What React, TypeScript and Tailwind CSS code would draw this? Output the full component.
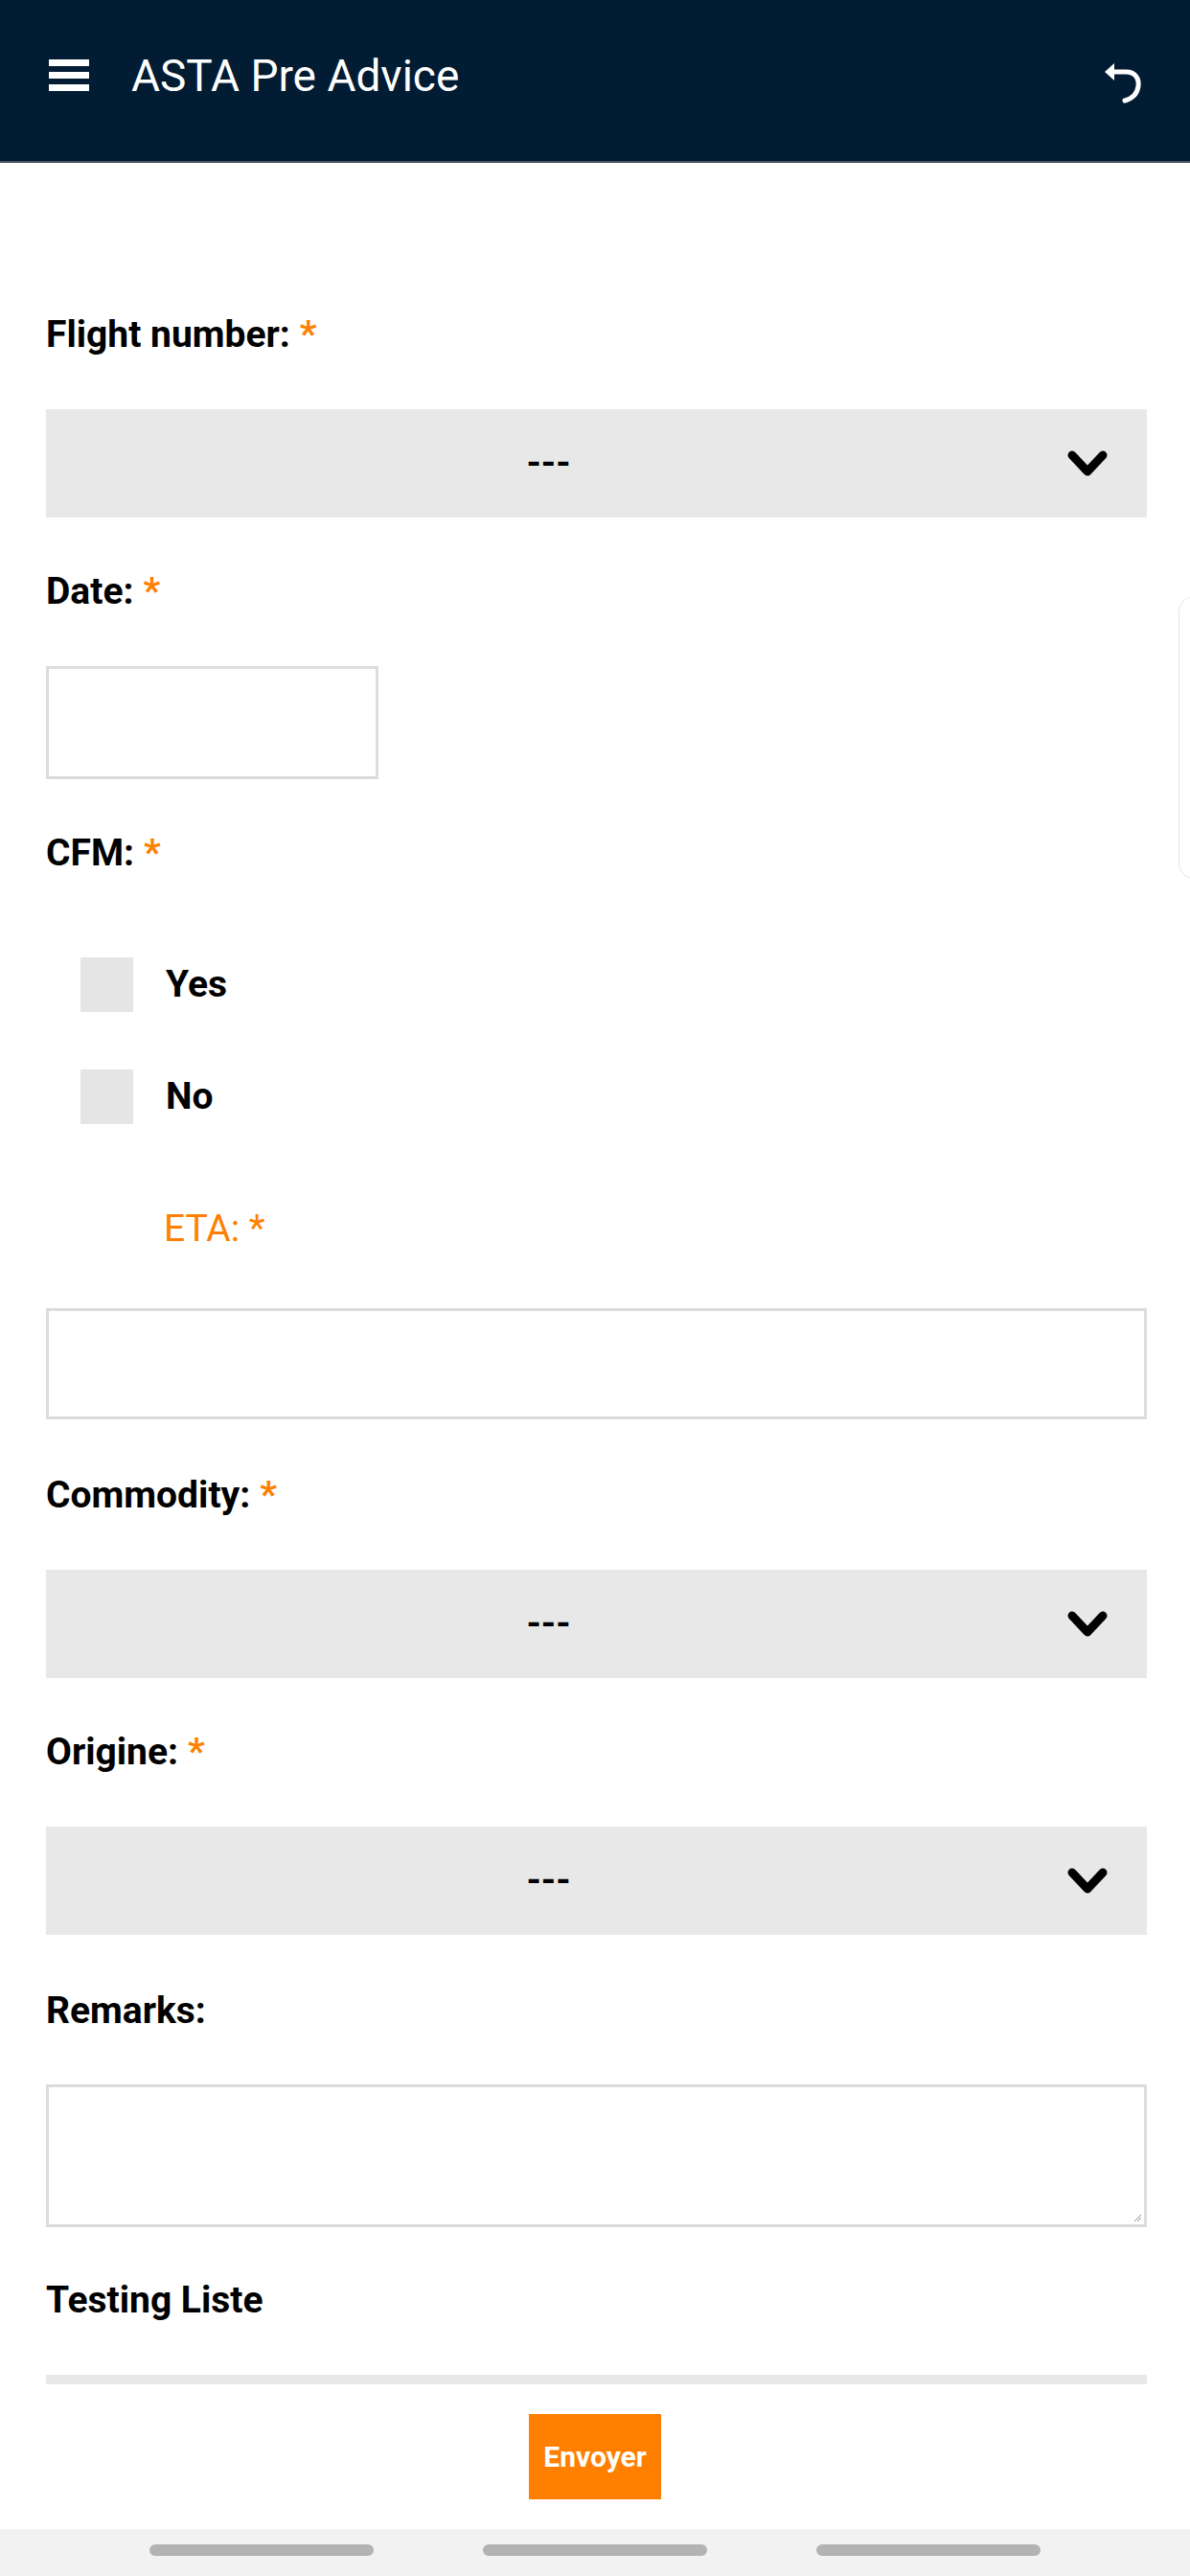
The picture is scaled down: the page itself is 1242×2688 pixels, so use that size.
import React from "react";

const font = { fontFamily: "Roboto, 'Noto Sans', Arial, sans-serif" };

function Label({ text, required }: { text: string; required?: boolean }) {
  return (
    <div className="h-[60px] flex items-center text-[39px] font-bold text-black leading-none">
      <span>{text}</span>
      {required && <span className="ml-[10px] text-[#ff7f00]">*</span>}
    </div>
  );
}

function Chevron() {
  return (
    <svg width="48" height="34" viewBox="0 0 48 34" className="absolute right-[37px] top-1/2 -translate-y-1/2">
      <polyline
        points="7,8 23,25 39,8"
        fill="none"
        stroke="#000"
        strokeWidth="9"
        strokeLinecap="round"
        strokeLinejoin="round"
      />
    </svg>
  );
}

function SelectBox({ className = "" }: { className?: string }) {
  return (
    <div className={`relative h-[113px] bg-[#e8e8e8] flex items-center justify-center pr-[100px] ${className}`}>
      <span className="text-[39px] font-bold text-black leading-none">---</span>
      <Chevron />
    </div>
  );
}

function CheckRow({ text, className = "" }: { text: string; className?: string }) {
  return (
    <div className={`flex items-center pl-[36px] ${className}`}>
      <div className="w-[55px] h-[57px] bg-[#e5e5e5]" />
      <span className="ml-[34px] text-[39px] font-bold text-black leading-none">{text}</span>
    </div>
  );
}

export default function App() {
  return (
    <div className="relative w-[1242px] h-[2688px] bg-white overflow-hidden flex flex-col" style={font}>
      {/* top app bar */}
      <header className="h-[170px] shrink-0 bg-[#011c33] border-b-[2px] border-[#4a5663] flex items-start">
        <div className="h-[157px] w-full flex items-center pl-[51px] pr-[50px]">
          <div className="w-[42px] flex flex-col gap-[6px]">
            <div className="h-[7px] bg-white" />
            <div className="h-[7px] bg-white" />
            <div className="h-[7px] bg-white" />
          </div>
          <h1 className="ml-[44px] text-[46px] text-white font-normal leading-none">ASTA Pre Advice</h1>
          <svg width="44" height="52" viewBox="0 0 44 52" className="ml-auto mt-[12px]">
            <path
              d="M12 16 H27 C37 16 41 23 40 31 C39 39 33 44 26 46"
              fill="none"
              stroke="#fff"
              strokeWidth="5"
              strokeLinecap="round"
            />
            <polygon points="5,16 15,7 15,25" fill="#fff" />
          </svg>
        </div>
      </header>

      {/* form */}
      <main className="flex-1 flex flex-col px-[48px] pt-[149px] pr-[45px]">
        <Label text="Flight number:" required />
        <SelectBox className="mt-[48px]" />

        <div className="mt-[47px]">
          <Label text="Date:" required />
        </div>
        <div className="mt-[48px] w-[347px] h-[118px] border-[3px] border-[#dcdcdc] bg-white" />

        <div className="mt-[47px]">
          <Label text="CFM:" required />
        </div>
        <CheckRow text="Yes" className="mt-[79px]" />
        <CheckRow text="No" className="mt-[60px]" />

        <div className="mt-[79px] h-[60px] flex items-center pl-[123px] text-[39px] text-[#ff7f00] leading-none">
          ETA: *
        </div>
        <div className="mt-[53px] h-[116px] border-[3px] border-[#dcdcdc] bg-white" />

        <div className="mt-[49px]">
          <Label text="Commodity:" required />
        </div>
        <SelectBox className="mt-[48px]" />

        <div className="mt-[47px]">
          <Label text="Origine:" required />
        </div>
        <SelectBox className="mt-[48px]" />

        <div className="mt-[49px]">
          <Label text="Remarks:" />
        </div>
        <div className="relative mt-[47px] h-[149px] border-[3px] border-[#dcdcdc] bg-white">
          <svg width="10" height="10" viewBox="0 0 10 10" className="absolute right-[2px] bottom-[2px]">
            <line x1="2" y1="9" x2="9" y2="2" stroke="#888" strokeWidth="1" />
            <line x1="5" y1="9" x2="9" y2="5" stroke="#888" strokeWidth="1" />
          </svg>
        </div>

        <div className="mt-[46px]">
          <Label text="Testing Liste" />
        </div>
        <div className="mt-[48px] h-[10px] bg-[#e8e8e8]" />

        <div className="mt-[31px] flex justify-center pr-[3px]">
          <button className="w-[138px] h-[89px] bg-[#ff7f00] text-white text-[30px] font-bold leading-none">
            Envoyer
          </button>
        </div>
      </main>

      {/* system navigation strip */}
      <footer className="h-[49px] shrink-0 bg-[#f2f2f2] flex items-center justify-center gap-[114px] pb-[6px]">
        <div className="w-[234px] h-[12px] rounded-full bg-[#b3b3b3]" />
        <div className="w-[234px] h-[12px] rounded-full bg-[#b3b3b3]" />
        <div className="w-[234px] h-[12px] rounded-full bg-[#b3b3b3]" />
      </footer>

      {/* edge handle */}
      <div className="absolute left-[1230px] top-[622px] w-[40px] h-[295px] rounded-l-[16px] border border-[#e6e6e6] bg-white" />
    </div>
  );
}
